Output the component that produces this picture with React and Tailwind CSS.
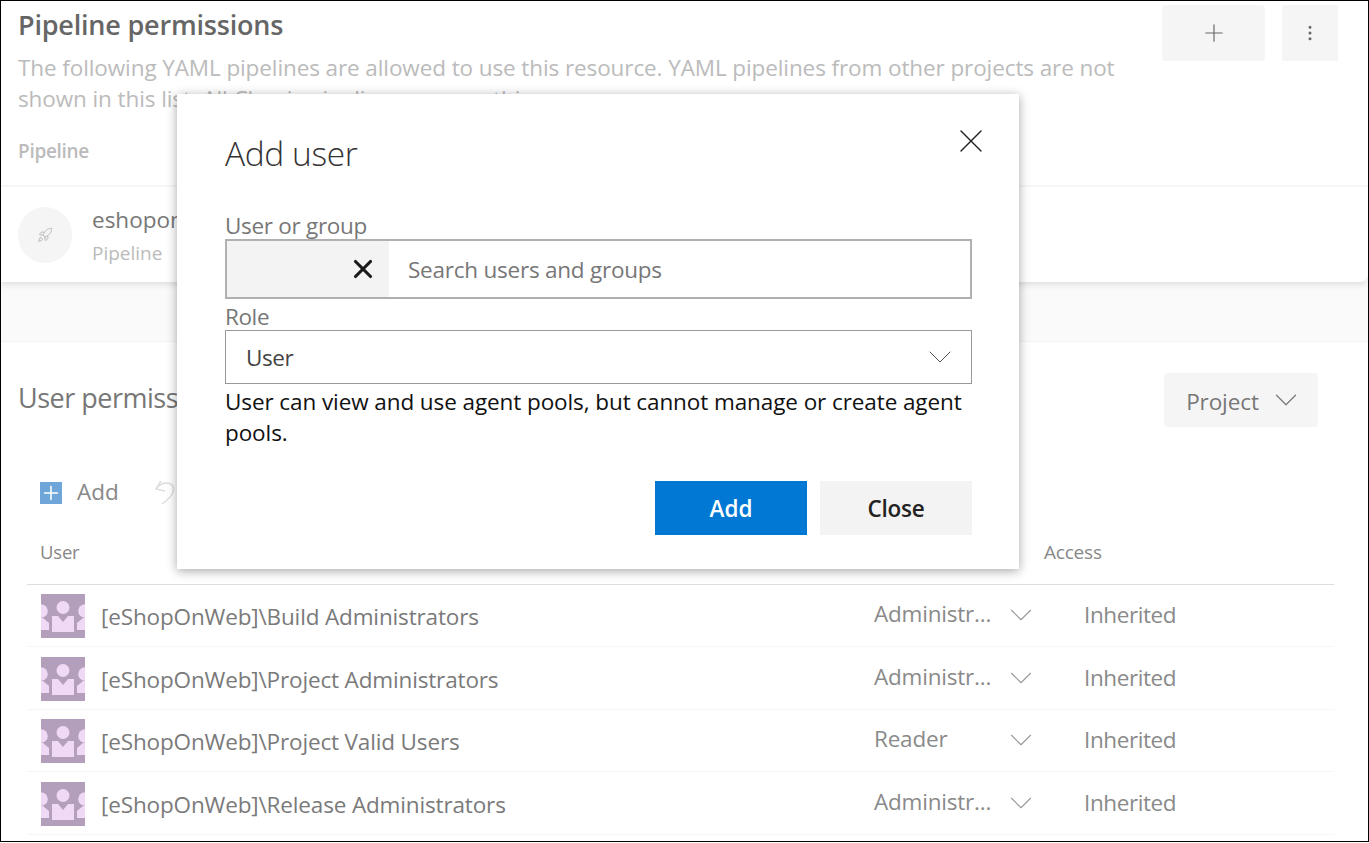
import React from 'react';
import { Plus, X, ChevronDown, EllipsisVertical, Rocket } from 'lucide-react';

const rows = [
    { name: '[eShopOnWeb]\\Build Administrators', role: 'Administr...' },
    { name: '[eShopOnWeb]\\Project Administrators', role: 'Administr...' },
    { name: '[eShopOnWeb]\\Project Valid Users', role: 'Reader' },
    { name: '[eShopOnWeb]\\Release Administrators', role: 'Administr...' },
];

// Group avatar, the three people cut by the square
const GroupIcon = () => (
    <svg width="44" height="44" viewBox="0 0 44 44" className="shrink-0 translate-y-px">
        <rect width="44" height="44" fill="#b39fbb" />
        <circle cx="22" cy="13.5" r="6.5" fill="#efd9f4" />
        <path d="M11 22h6l5 6 5-6h6v16H11z" fill="#efd9f4" />
        <circle cx="0" cy="17" r="6.8" fill="#efd9f4" />
        <circle cx="44" cy="17" r="6.8" fill="#efd9f4" />
        <path d="M0 24h2l6 5v7H0z" fill="#efd9f4" />
        <path d="M44 24h-2l-6 5v7h8z" fill="#efd9f4" />
    </svg>
);

const UndoIcon = () => (
    <svg width="22" height="25" viewBox="0 0 22 25" fill="none" stroke="#ddd" strokeWidth="1.5" className="shrink-0">
        <path d="M2 9C6 3 14 1 18 5c4 5 0 12-10 19" />
        <path d="M7 1 2 9l9 2" />
    </svg>
);

const UserRow = ({ row }) => (
    <div className="flex items-center h-[62.5px] border-b border-[#f6f6f6] pl-[14px]">
        <GroupIcon />
        <span className="ml-4 w-[773px] text-[22.5px] text-[#7a7a7a] tracking-[-0.15px] translate-y-[2px]">{row.name}</span>
        <span className="w-[136px] text-[22.5px] text-[#8a8a8a] tracking-[-0.2px] -translate-y-px">{row.role}</span>
        <ChevronDown size={38} strokeWidth={0.7} className="text-[#999] -ml-[8px] -mr-[8px] shrink-0" />
        <span className="ml-[52px] text-[22.5px] text-[#8a8a8a] tracking-[-0.4px]">Inherited</span>
    </div>
);

const AddUserDialog = () => (
    <div className="absolute left-[176px] top-[93px] w-[842px] h-[475px] bg-white shadow-[0_2px_10px_rgba(0,0,0,0.35)] pl-12 pr-[47px]">
        <button className="absolute right-[28px] top-[27px] text-[#222]">
            <X size={40} strokeWidth={0.8} />
        </button>
        <h2 className="pt-[33px] text-[33.5px] leading-[52px] font-light text-[#333] tracking-[-0.4px]">Add user</h2>
        <div className="mt-[33px] text-[22.5px] leading-[27px] text-[#777] tracking-[-0.3px]">User or group</div>
        <div className="flex items-center h-[60px] border-2 border-[#b0b0b0]">
            <div className="w-[162px] h-full bg-[#f3f3f3] flex items-center justify-end pr-[11px]">
                <X size={30} strokeWidth={2.5} className="text-[#1a1a1a]" />
            </div>
            <span className="ml-[19px] text-[22.5px] text-[#777] tracking-[-0.23px] translate-y-px">Search users and groups</span>
        </div>
        <div className="mt-[5px] text-[22.5px] leading-[26px] text-[#777] tracking-[-0.4px]">Role</div>
        <div className="flex items-center justify-between h-[54px] border border-[#999] pl-5 pr-[11px]">
            <span className="text-[22.5px] text-[#444] tracking-[-0.4px] translate-y-px">User</span>
            <ChevronDown size={40} strokeWidth={0.6} className="text-[#555]" />
        </div>
        <p className="mt-[2px] text-[22.5px] leading-[31px] text-[#111] tracking-[-0.09px]">
            User can view and use agent pools, but cannot manage or create agent pools.
        </p>
        <div className="mt-[33px] flex justify-end gap-[13px]">
            <button className="w-[152px] h-[54px] bg-[#0078d4] text-white text-[22.5px] font-semibold tracking-[0px] pt-px">Add</button>
            <button className="w-[152px] h-[54px] bg-[#f3f3f3] text-[#222] text-[22.5px] font-semibold tracking-[-0.2px] pt-px">Close</button>
        </div>
    </div>
);

export default function App() {
    return (
        <div className="relative w-[1369px] h-[842px] border border-black bg-white overflow-hidden font-['Open_Sans',sans-serif]">
            {/* Pipeline permissions card */}
            <div className="h-[281px] rounded-br-lg bg-white shadow-[0_2px_7px_rgba(0,0,0,0.13)] relative">
                <div className="flex justify-between pl-[17px] pr-[30px] h-[184px]">
                    <div className="w-[1120px]">
                        <h1 className="pt-[6px] text-[27px] leading-[36px] font-semibold text-[#666] tracking-[-0.2px]">Pipeline permissions</h1>
                        <p className="mt-[9px] text-[22.5px] leading-[31px] text-[#bbb] tracking-[-0.1px]">
                            The following YAML pipelines are allowed to use this resource. YAML pipelines from other projects are not shown in this list. All Classic pipelines can use this resource.
                        </p>
                        <div className="mt-[23px] text-[19px] font-semibold text-[#bbb] tracking-[-0.3px]">Pipeline</div>
                    </div>
                    <div className="flex gap-[17px] pt-1">
                        <button className="w-[103px] h-[56px] rounded-sm bg-[#f5f5f5] flex items-center justify-center text-[#666]">
                            <Plus size={28} strokeWidth={1} />
                        </button>
                        <button className="w-[56px] h-[56px] bg-[#f5f5f5] flex items-center justify-center text-[#666]">
                            <EllipsisVertical size={20} strokeWidth={1.6} />
                        </button>
                    </div>
                </div>
                <div className="flex items-center gap-[20px] h-[97px] border-t-2 border-[#f6f6f6] pl-[17px]">
                    <div className="w-[54px] h-[56px] rounded-full bg-[#f5f5f5] flex items-center justify-center">
                        <Rocket size={16} strokeWidth={1.1} className="text-[#aaa]" />
                    </div>
                    <div className="pt-[4px]">
                        <div className="text-[22.5px] leading-[32px] text-[#777]">eshoponweb-ci</div>
                        <div className="text-[19px] leading-[34px] text-[#bbb]">Pipeline</div>
                    </div>
                </div>
            </div>

            {/* Gray band between the cards */}
            <div className="h-[60px] bg-[#fafafa] border-b border-[#f4f4f4]" />

            {/* User permissions */}
            <div className="pl-[26px] pr-[34px]">
                <div className="flex items-center justify-between h-[54px] mt-[31px] -ml-[9px] pr-[16px]">
                    <span className="text-[27px] text-[#777] tracking-[-0.5px] -translate-y-[2px]">User permissions</span>
                    <button className="w-[154px] h-[54px] rounded-sm bg-[#f5f5f5] flex items-center justify-center gap-[8px] pl-[9px] pt-1 text-[22.5px] font-medium text-[#777] tracking-[-0.1px]">
                        Project
                        <ChevronDown size={38} strokeWidth={0.75} className="-translate-y-[2px]" />
                    </button>
                </div>
                <div className="flex items-center h-[42px] mt-[44px] pl-[13px]">
                    <span className="w-[22px] h-[22px] bg-[#6fa6d9] flex items-center justify-center text-white translate-y-px">
                        <Plus size={22} strokeWidth={1.7} />
                    </span>
                    <span className="ml-[15px] text-[22.5px] text-[#888] tracking-[0px]">Add</span>
                    <span className="ml-[35px]"><UndoIcon /></span>
                </div>
                <div className="relative h-[71.5px] border-b border-[#dedede] pl-[13px] pt-[21px] text-[18.5px] leading-[36px] text-[#888] tracking-[-0.2px]">
                    User
                    <span className="absolute left-[1017px] top-[21px] text-[19px]">Access</span>
                </div>
                {rows.map((row) => <UserRow key={row.name} row={row} />)}
            </div>

            <AddUserDialog />
        </div>
    );
}
